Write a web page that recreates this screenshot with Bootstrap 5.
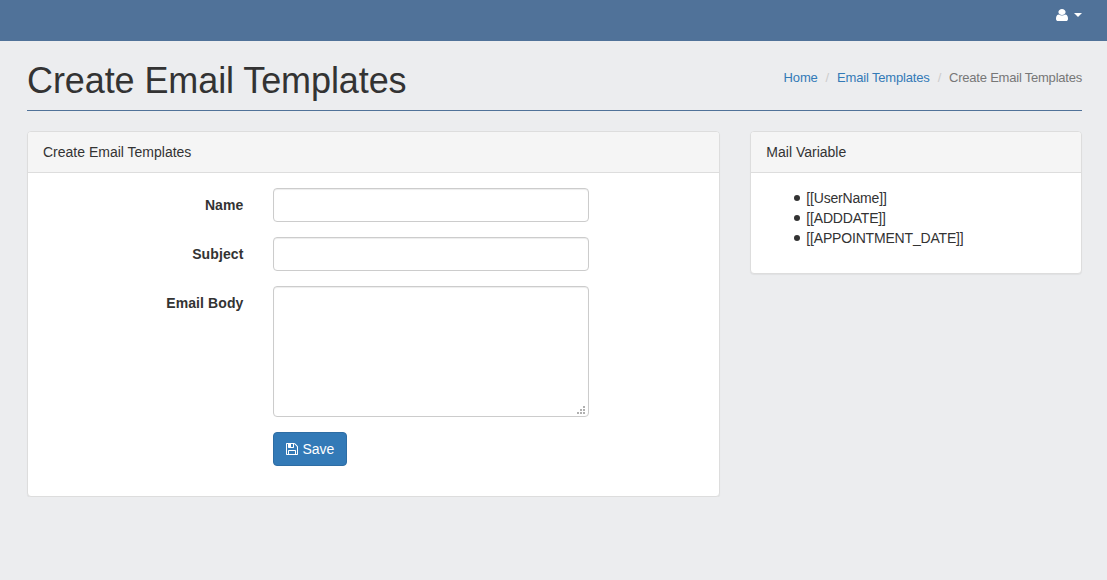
<!DOCTYPE html>
<html lang="en">
<head>
<meta charset="utf-8">
<meta name="viewport" content="width=device-width, initial-scale=1">
<title>Create Email Templates</title>
<link rel="stylesheet" href="https://cdn.jsdelivr.net/npm/bootstrap@5.3.0/dist/css/bootstrap.min.css">
<style>
body { background: #ecedef; color: #333; font: 14px/20px "Liberation Sans", Arial, sans-serif; }
a { color: #337ab7; text-decoration: none; }
.topbar { height: 41px; background: #507299; padding: 0 25px; }
.topbar .dropdown-toggle { height: 30px; color: #fff; gap: 6px; }
.topbar .dropdown-toggle::after { margin: 0; border-top: 4px solid; border-right: 4px solid transparent; border-left: 4px solid transparent; }
.page { padding: 0 25px 0 27px; }
.page-head { height: 70px; border-bottom: 1px solid #507299; margin-bottom: 20px; padding-top: 20px; }
.page-head h1 { font-size: 36px; line-height: 40px; font-weight: 400; letter-spacing: -.09px; }
.breadcrumb { font-size: 13px; line-height: 18px; margin-top: 8px; letter-spacing: -.17px; --bs-breadcrumb-divider-color: #ccc; --bs-breadcrumb-item-active-color: #777; --bs-breadcrumb-item-padding-x: 8px; }
.breadcrumb .active { letter-spacing: -.22px; }
.row { --bs-gutter-x: 30px; }
.card { --bs-card-border-color: #ddd; --bs-card-border-radius: 4px; --bs-card-inner-border-radius: 3px; --bs-card-spacer-x: 15px; --bs-card-spacer-y: 15px; --bs-card-cap-bg: #f5f5f5; --bs-card-cap-padding-x: 15px; --bs-card-cap-padding-y: 10px; --bs-card-color: #333; box-shadow: 0 1px 1px rgba(0,0,0,.05); }
.field { margin-bottom: 15px; }
.field label { font-size: 14px; line-height: 20px; padding-top: 7px; padding-bottom: 0; font-weight: 700; letter-spacing: .1px; }
.form-control { height: 34px; padding: 6px 12px; font-size: 14px; line-height: 20px; border-color: #ccc; border-radius: 4px; box-shadow: inset 0 1px 1px rgba(0,0,0,.075); }
textarea.form-control { height: 131px; resize: none; display: block; }
.grip { right: 19px; bottom: 3px; }
.btn-primary { --bs-btn-bg: #337ab7; --bs-btn-border-color: #2e6da4; --bs-btn-padding-x: 12px; --bs-btn-padding-y: 6px; --bs-btn-font-size: 14px; --bs-btn-line-height: 20px; --bs-btn-border-radius: 4px; gap: 4px; }
.variables { padding-left: 28px; margin-bottom: 10px; letter-spacing: -.18px; }
.variables li { display: flex; align-items: center; gap: 6px; }
.variables li::before { content: ""; width: 6px; height: 6px; border-radius: 50%; background: #333; }
</style>
</head>
<body>
<nav class="topbar d-flex justify-content-end">
  <a href="#" class="dropdown-toggle d-flex align-items-center" data-bs-toggle="dropdown" aria-label="Account">
    <svg width="12" height="12" viewBox="256 128 1280 1536" preserveAspectRatio="none" fill="currentColor" aria-hidden="true"><path d="M1536 1399q0 109-62.5 187t-150.5 78h-854q-88 0-150.5-78t-62.5-187q0-85 8.5-160.5t31.5-152 58.5-131 94-89 134.5-34.5q131 128 313 128t313-128q76 0 134.5 34.5t94 89 58.5 131 31.5 152 8.5 160.5zm-256-887q0 159-112.5 271.5t-271.5 112.5-271.5-112.5-112.5-271.5 112.5-271.5 271.5-112.5 271.5 112.5 112.5 271.5z"/></svg>
  </a>
</nav>
<main class="page">
  <header class="page-head d-flex justify-content-between align-items-start">
    <h1 class="m-0">Create Email Templates</h1>
    <ol class="breadcrumb mb-0">
      <li class="breadcrumb-item"><a href="#">Home</a></li>
      <li class="breadcrumb-item"><a href="#">Email Templates</a></li>
      <li class="breadcrumb-item active">Create Email Templates</li>
    </ol>
  </header>
  <div class="row">
    <div class="col-8">
      <div class="card">
        <div class="card-header">Create Email Templates</div>
        <form class="card-body">
          <div class="row field">
            <label class="col-4 text-end" for="name">Name</label>
            <div class="col-6"><input type="text" class="form-control" id="name"></div>
          </div>
          <div class="row field">
            <label class="col-4 text-end" for="subject">Subject</label>
            <div class="col-6"><input type="text" class="form-control" id="subject"></div>
          </div>
          <div class="row field">
            <label class="col-4 text-end" for="body">Email Body</label>
            <div class="col-6 position-relative">
              <textarea class="form-control" id="body"></textarea>
              <svg class="grip position-absolute" width="8" height="8" fill="#b0b0b0" shape-rendering="crispEdges" aria-hidden="true"><path d="M6 0h2v2h-2zM3 3h2v2h-2zM6 3h2v2h-2zM0 6h2v2h-2zM3 6h2v2h-2zM6 6h2v2h-2z"/></svg>
            </div>
          </div>
          <div class="row field">
            <div class="col-6 offset-4">
              <button type="button" class="btn btn-primary d-inline-flex align-items-center">
                <svg width="12" height="12" viewBox="128 128 1536 1536" fill="currentColor" aria-hidden="true"><path d="M512 1536h768v-384h-768v384zm896 0h128v-896q0-14-10-38.5t-20-34.5l-281-281q-10-10-34-20t-39-10v416q0 40-28 68t-68 28h-576q-40 0-68-28t-28-68v-416h-128v1280h128v-416q0-40 28-68t68-28h832q40 0 68 28t28 68v416zm-384-928v-320q0-13-9.5-22.5t-22.5-9.5h-192q-13 0-22.5 9.5t-9.5 22.5v320q0 13 9.5 22.5t22.5 9.5h192q13 0 22.5-9.5t9.5-22.5zm640 32v928q0 40-28 68t-68 28h-1344q-40 0-68-28t-28-68v-1344q0-40 28-68t68-28h928q40 0 88 20t76 48l280 280q28 28 48 76t20 88z"/></svg>
                Save
              </button>
            </div>
          </div>
        </form>
      </div>
    </div>
    <div class="col-4">
      <div class="card">
        <div class="card-header">Mail Variable</div>
        <div class="card-body">
          <ul class="variables">
            <li>[[UserName]]</li>
            <li>[[ADDDATE]]</li>
            <li>[[APPOINTMENT_DATE]]</li>
          </ul>
        </div>
      </div>
    </div>
  </div>
</main>
<script src="https://cdn.jsdelivr.net/npm/bootstrap@5.3.0/dist/js/bootstrap.bundle.min.js"></script>
</body>
</html>
